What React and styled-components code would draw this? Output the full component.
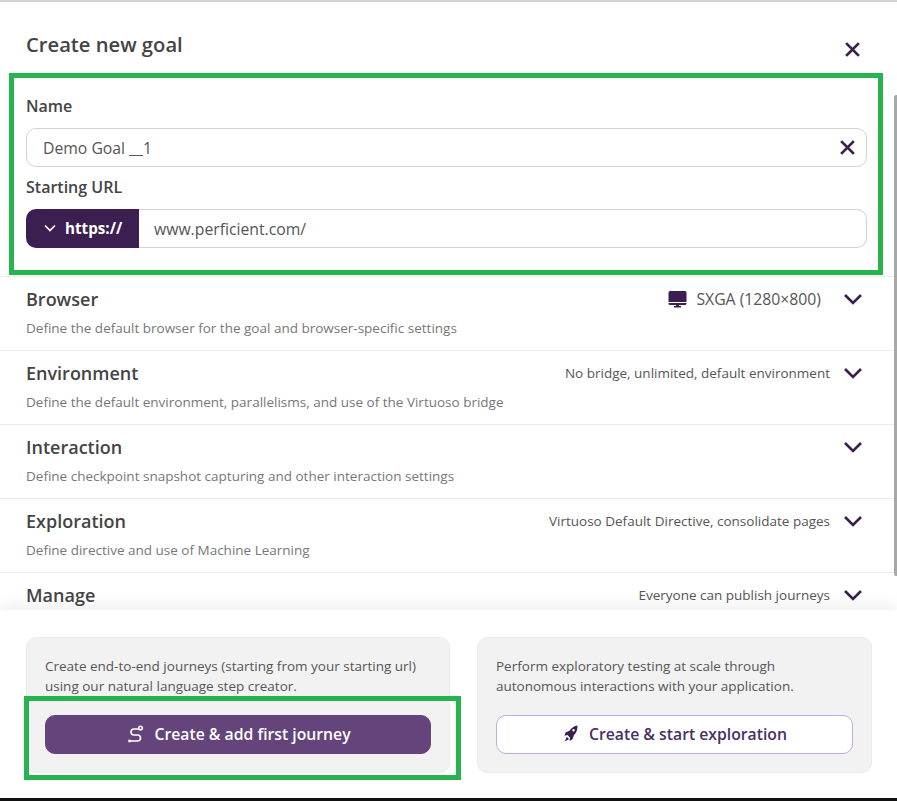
import React from "react";
import styled, { createGlobalStyle } from "styled-components";

const GlobalStyle = createGlobalStyle`
  html, body {
    margin: 0;
    padding: 0;
    background: #fff;
    font-family: "Open Sans", "Liberation Sans", sans-serif;
  }
  * { box-sizing: border-box; }
`;

const Page = styled.div`
  position: relative;
  width: 897px;
  height: 801px;
  display: flex;
  flex-direction: column;
  overflow: hidden;
  background: #fff;
  border-top: 2px solid #d4d4d4;
  border-bottom: 3px solid #111;
`;

const Header = styled.div`
  height: 71px;
  flex: none;
  display: flex;
  justify-content: space-between;
  padding: 29px 36px 0 26px;
`;

const Title = styled.h1`
  margin: 0;
  font-size: 20.2px;
  line-height: 26px;
  font-weight: 600;
  color: #444;
`;

const CloseIcon = styled.svg`
  width: ${(p) => p.$size}px;
  height: ${(p) => p.$size}px;
  flex: none;
  margin-top: ${(p) => p.$top || 0}px;
  stroke: #3b1f50;
  stroke-width: 2.6;
  fill: none;
`;

const Scroller = styled.div`
  flex: 1;
  min-height: 0;
  overflow: hidden;
`;

const Fields = styled.div`
  padding: 23px 30px 0 26px;
  height: 203px;
`;

const Label = styled.div`
  font-size: 16px;
  line-height: 20px;
  font-weight: 600;
  color: #444;
  margin-bottom: ${(p) => p.$gap}px;
`;

const NameInput = styled.div`
  height: 39px;
  display: flex;
  align-items: center;
  justify-content: space-between;
  padding: 0 10px 0 16px;
  border: 1px solid #d3d3d3;
  border-radius: 10px;
  font-size: 15.75px;
  color: #555;
  margin-bottom: 10px;
`;

const UrlGroup = styled.div`
  height: 39px;
  display: flex;
`;

const Protocol = styled.div`
  width: 113px;
  flex: none;
  display: flex;
  align-items: center;
  gap: 9px;
  padding: 0 0 1px 18px;
  background: #3b1f50;
  border-radius: 10px 0 0 10px;
  color: #fff;
  font-size: 15.2px;
  font-weight: 700;
`;

const UrlValue = styled.div`
  flex: 1;
  display: flex;
  align-items: center;
  padding-left: 15px;
  border: 1px solid #d3d3d3;
  border-left: none;
  border-radius: 0 10px 10px 0;
  font-size: 15.75px;
  color: #555;
`;

const Section = styled.div`
  height: 74px;
  padding: 11px 34px 0 26px;
  border-top: 1px solid #ececec;
`;

const SectionHead = styled.div`
  display: flex;
  align-items: center;
  justify-content: space-between;
  height: 22px;
`;

const SectionTitle = styled.div`
  font-size: 18px;
  font-weight: 600;
  line-height: 22px;
  color: #444;
`;

const SectionMeta = styled.div`
  display: flex;
  align-items: center;
  font-size: ${(p) => (p.$large ? 15.75 : 13.5)}px;
  color: #555;
`;

const MonitorIcon = styled.svg`
  width: 19px;
  height: 18px;
  flex: none;
  margin-right: 9px;
  fill: #3b1f50;
`;

const Chevron = styled.svg`
  width: 20px;
  height: 12px;
  flex: none;
  margin-left: ${(p) => p.$left}px;
  fill: none;
  stroke: #3b1f50;
  stroke-width: 2.6;
`;

const SectionDesc = styled.div`
  margin-top: 8px;
  font-size: 13.5px;
  line-height: 20px;
  color: #777;
`;

const Footer = styled.div`
  position: relative;
  flex: none;
  height: 188px;
  display: grid;
  grid-template-columns: 424px 395px;
  gap: 27px;
  padding: 27px 25px 25px 26px;
  background: #fff;
  box-shadow: 0 -6px 14px rgba(0, 0, 0, 0.06);
`;

const Card = styled.div`
  display: flex;
  flex-direction: column;
  justify-content: space-between;
  padding: 18px 18px 18px;
  background: #f2f2f2;
  border: 1px solid #ececec;
  border-radius: 10px;
`;

const CardText = styled.p`
  margin: 0;
  font-size: 13.5px;
  line-height: 20px;
  color: #555;
`;

const Button = styled.button`
  height: 39px;
  display: flex;
  align-items: center;
  justify-content: center;
  gap: ${(p) => (p.$primary ? 10 : 11)}px;
  padding: 0 0 2px 2px;
  border-radius: 10px;
  font-family: inherit;
  font-size: 15.75px;
  font-weight: 600;
  color: ${(p) => (p.$primary ? "#fff" : "#4a2f63")};
  background: ${(p) => (p.$primary ? "#65447b" : "#fff")};
  border: 1px solid ${(p) => (p.$primary ? "#65447b" : "#c4a9d8")};
`;

const RocketIcon = styled.svg`
  width: 14px;
  height: 17px;
  fill: #3b1f50;
`;

const RouteIcon = styled.svg`
  width: 17px;
  height: 18px;
  fill: none;
  stroke: #fff;
  stroke-width: 1.6;
  stroke-linecap: round;
`;

const Highlight = styled.div`
  position: absolute;
  left: ${(p) => p.$x}px;
  top: ${(p) => p.$y}px;
  width: ${(p) => p.$w}px;
  height: ${(p) => p.$h}px;
  border: 5px solid #27b34f;
  pointer-events: none;
`;

const ScrollThumb = styled.div`
  position: absolute;
  right: 0;
  top: 93px;
  width: 3px;
  height: 481px;
  background: #a8a8a8;
  border-radius: 2px 0 0 2px;
`;

const X = ({ size, top }) => (
  <CloseIcon $size={size} $top={top} viewBox="0 0 16 16">
    <path d="M2 2 L14 14 M14 2 L2 14" />
  </CloseIcon>
);

const Down = ({ left }) => (
  <Chevron $left={left} viewBox="0 0 20 12">
    <path d="M2 2 L10 10 L18 2" />
  </Chevron>
);

const Monitor = () => (
  <MonitorIcon viewBox="0 0 19 18">
    <path d="M2 1 H17 A1.5 1.5 0 0 1 18.5 2.5 V12 H0.5 V2.5 A1.5 1.5 0 0 1 2 1 Z" />
    <path d="M0.5 13 H18.5 V13.5 A1.5 1.5 0 0 1 17 15 H2 A1.5 1.5 0 0 1 0.5 13.5 Z" />
    <path d="M8 15 H11 V16 H13 V17.5 H6 V16 H8 Z" />
  </MonitorIcon>
);

const sections = [
  { title: "Browser", desc: "Define the default browser for the goal and browser-specific settings", meta: "SXGA (1280×800)", monitor: true, left: 22 },
  { title: "Environment", desc: "Define the default environment, parallelisms, and use of the Virtuoso bridge", meta: "No bridge, unlimited, default environment", left: 13 },
  { title: "Interaction", desc: "Define checkpoint snapshot capturing and other interaction settings", meta: "", left: 13 },
  { title: "Exploration", desc: "Define directive and use of Machine Learning", meta: "Virtuoso Default Directive, consolidate pages", left: 13 },
  { title: "Manage", meta: "Everyone can publish journeys", left: 13 },
];

const App = () => {
  return (
    <Page>
      <GlobalStyle />
      <Header>
        <Title>Create new goal</Title>
        <X size={17} top={10} />
      </Header>
      <Scroller>
        <Fields>
          <Label $gap={12}>Name</Label>
          <NameInput>
            Demo Goal __1
            <X size={17} />
          </NameInput>
          <Label $gap={12}>Starting URL</Label>
          <UrlGroup>
            <Protocol>
              <svg width="12" height="8" viewBox="0 0 12 8" fill="none" stroke="#fff" strokeWidth="1.7">
                <path d="M1 1.5 L6 6.5 L11 1.5" />
              </svg>
              https://
            </Protocol>
            <UrlValue>www.perficient.com/</UrlValue>
          </UrlGroup>
        </Fields>
        {sections.map((s) => (
          <Section key={s.title}>
            <SectionHead>
              <SectionTitle>{s.title}</SectionTitle>
              <SectionMeta $large={s.monitor}>
                {s.monitor && <Monitor />}
                {s.meta}
                <Down left={s.left} />
              </SectionMeta>
            </SectionHead>
            {s.desc && <SectionDesc>{s.desc}</SectionDesc>}
          </Section>
        ))}
      </Scroller>
      <Footer>
        <Card>
          <CardText>
            Create end-to-end journeys (starting from your starting url)
            <br />
            using our natural language step creator.
          </CardText>
          <Button $primary>
            <RouteIcon viewBox="0 0 17 18">
              <circle cx="13.5" cy="3" r="1.8" />
              <path d="M11.5 4 H7 A3 3 0 0 0 7 10 H10.5 A3 3 0 0 1 10.5 16 H3" />
              <circle cx="2.5" cy="16" r="0.6" />
            </RouteIcon>
            Create &amp; add first journey
          </Button>
        </Card>
        <Card>
          <CardText>
            Perform exploratory testing at scale through
            <br />
            autonomous interactions with your application.
          </CardText>
          <Button>
            <RocketIcon viewBox="0 0 14 16" preserveAspectRatio="none">
              <path
                fillRule="evenodd"
                d="M13.5 0.5 C10 1 7.5 2.5 5.5 5.5 L1.5 7 L0.5 10 L3.5 9.5 L6 12 L5.5 15 L8.5 13.5 L10 9.5 C12.5 7.5 13.5 4.5 13.5 0.5 Z M9.5 3.8 A1.2 1.2 0 1 0 9.5 6.2 A1.2 1.2 0 1 0 9.5 3.8 Z"
              />
              <path d="M3 11 L0.5 15.5 L5 13.5 Z" />
            </RocketIcon>
            Create &amp; start exploration
          </Button>
        </Card>
      </Footer>
      <ScrollThumb />
      <Highlight $x={9} $y={71} $w={874} $h={202} />
      <Highlight $x={24} $y={694} $w={437} $h={84} />
    </Page>
  );
};

export default App;
